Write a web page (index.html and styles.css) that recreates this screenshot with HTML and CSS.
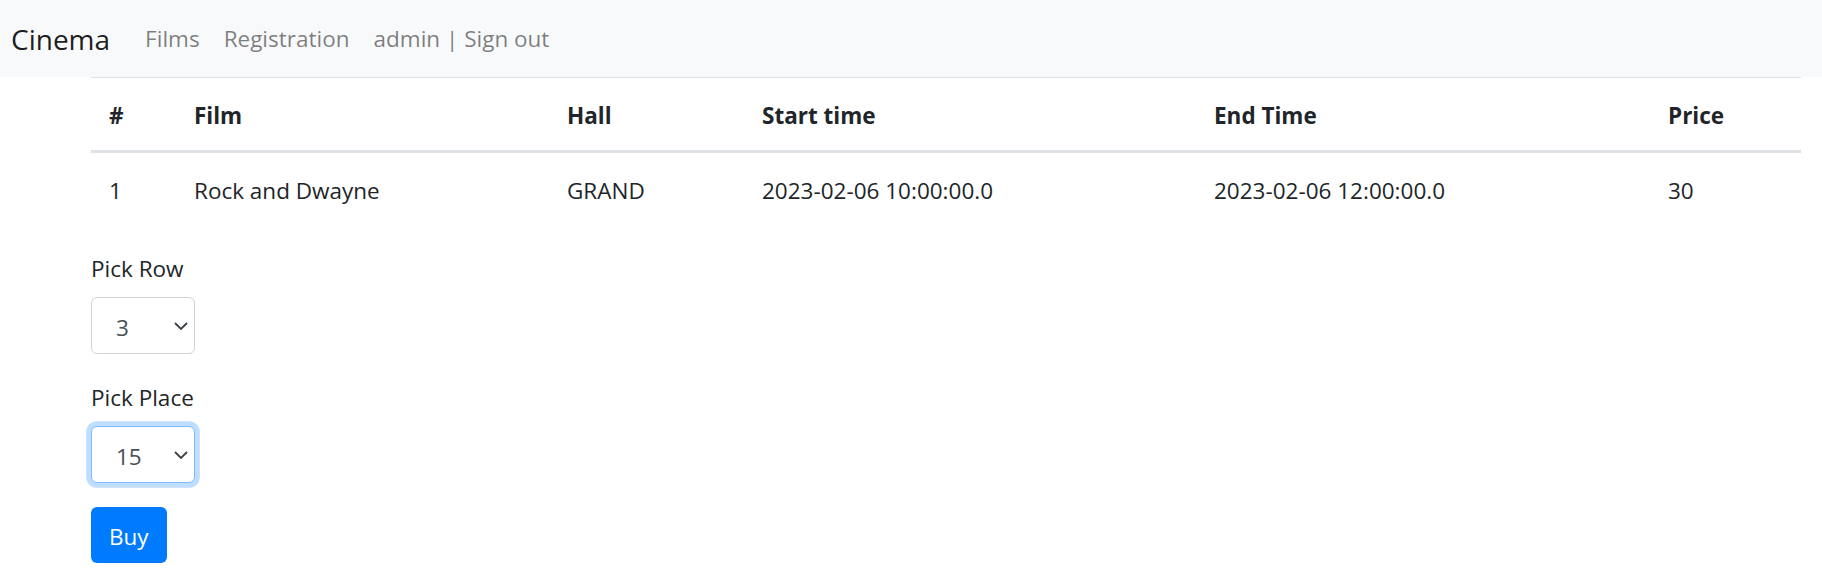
FILE: index.html
```html
<!DOCTYPE html>
<html lang="en">
<head>
<meta charset="utf-8">
<title>Cinema</title>
<link rel="stylesheet" href="styles.css">
</head>
<body>
<nav class="navbar">
  <a class="brand" href="#">Cinema</a>
  <a class="nav-link" href="#">Films</a>
  <a class="nav-link" href="#">Registration</a>
  <a class="nav-link" href="#">admin | Sign out</a>
</nav>
<main class="content">
  <table class="sessions">
    <colgroup>
      <col class="c-num"><col class="c-film"><col class="c-hall"><col class="c-start"><col class="c-end"><col class="c-price">
    </colgroup>
    <thead>
      <tr><th>#</th><th>Film</th><th>Hall</th><th>Start time</th><th>End Time</th><th>Price</th></tr>
    </thead>
    <tbody>
      <tr><td>1</td><td>Rock and Dwayne</td><td>GRAND</td><td>2023-02-06 10:00:00.0</td><td>2023-02-06 12:00:00.0</td><td>30</td></tr>
    </tbody>
  </table>
  <form class="ticket-form">
    <div class="form-group">
      <label class="label" for="row">Pick Row</label>
      <div class="select-wrap">
        <select id="row" class="select"><option>1</option><option>2</option><option selected>3</option></select>
        <svg class="chevron" width="14" height="8" viewBox="0 0 14 8"><path d="M1 1l6 6 6-6" fill="none" stroke="#3c4248" stroke-width="1.8"/></svg>
      </div>
    </div>
    <div class="form-group">
      <label class="label" for="place">Pick Place</label>
      <div class="select-wrap">
        <select id="place" class="select focused"><option>14</option><option selected>15</option></select>
        <svg class="chevron" width="14" height="8" viewBox="0 0 14 8"><path d="M1 1l6 6 6-6" fill="none" stroke="#3c4248" stroke-width="1.8"/></svg>
      </div>
    </div>
    <button type="button" class="btn">Buy</button>
  </form>
</main>
</body>
</html>
```
FILE: styles.css
```css
html, body {
  margin: 0;
  padding: 0;
  background: #fff;
}
body {
  font-family: "Open Sans", "Noto Sans", sans-serif;
  font-size: 22.5px;
  line-height: 36px;
  color: #212529;
}
a { text-decoration: none; }

.navbar {
  height: 77px;
  background: #f8f9fa;
  display: flex;
  align-items: center;
  padding-left: 11px;
}
.brand {
  font-size: 28px;
  color: rgba(0, 0, 0, 0.9);
  margin-right: 23px;
}
.nav-link {
  color: rgba(0, 0, 0, 0.5);
  padding: 0 12px;
}

.content {
  padding-left: 91px;
}
.sessions {
  width: 1710px;
  border-collapse: collapse;
  table-layout: fixed;
  margin-bottom: 24px;
}
.c-num { width: 85px; }
.c-film { width: 373px; }
.c-hall { width: 195px; }
.c-start { width: 452px; }
.c-end { width: 454px; }
.c-price { width: 151px; }
.sessions th, .sessions td {
  text-align: left;
  padding: 20px 18px 16px;
  height: 36px;
  white-space: nowrap;
}
.sessions th {
  font-weight: 700;
  border-top: 1px solid #dee2e6;
  border-bottom: 3px solid #dee2e6;
}

.form-group {
  margin-bottom: 24px;
}
.label {
  display: block;
  padding-top: 2px;
  margin-bottom: 10px;
}
.select-wrap {
  position: relative;
  width: 104px;
  height: 57px;
}
.select {
  appearance: none;
  -webkit-appearance: none;
  box-sizing: border-box;
  width: 104px;
  height: 57px;
  padding: 4px 0 0 24px;
  border: 1.5px solid #ced4da;
  border-radius: 6px;
  background: #fff;
  font: inherit;
  color: #495057;
  outline: none;
}
.select.focused {
  border-color: #80bdff;
  box-shadow: 0 0 0 4.8px rgba(0, 123, 255, 0.25);
}
.chevron {
  position: absolute;
  right: 7px;
  top: 25px;
  pointer-events: none;
}
.btn {
  box-sizing: border-box;
  height: 56px;
  padding: 4px 18px 0;
  border: 0;
  border-radius: 6px;
  background: #007bff;
  color: #fff;
  font: inherit;
}
```
